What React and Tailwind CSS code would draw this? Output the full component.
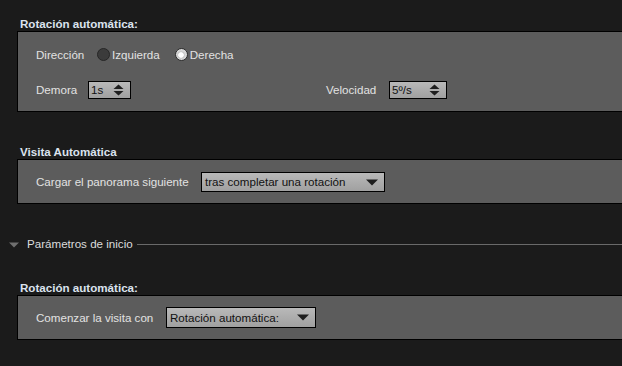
import React from "react";

const font = { fontFamily: '"Liberation Sans", Arial, sans-serif' };

function Stepper({ value, width }) {
  return (
    <div
      className={`flex items-center justify-between h-[18px] border border-black bg-gradient-to-b from-[#b9b9b9] to-[#a0a0a0] pl-[2px] pr-[6px] text-[#111] ${width}`}
    >
      <span className="leading-none">{value}</span>
      <svg width="11" height="12" viewBox="0 0 11 12">
        <path d="M0.5 5 L5.5 0.5 L10.5 5 Z" fill="#1e1e1e" />
        <path d="M0.5 7 L5.5 11.5 L10.5 7 Z" fill="#1e1e1e" />
      </svg>
    </div>
  );
}

function Dropdown({ value, width, height }) {
  return (
    <div
      className={`flex items-center justify-between border border-black bg-gradient-to-b from-[#b9b9b9] to-[#a0a0a0] pl-[3px] pr-[6px] text-[#111] ${width} ${height}`}
    >
      <span className="leading-none">{value}</span>
      <svg width="12" height="7" viewBox="0 0 12 7">
        <path d="M0 0.5 L12 0.5 L6 6.5 Z" fill="#1e1e1e" />
      </svg>
    </div>
  );
}

function Heading({ children }) {
  return (
    <div className="h-[14px] leading-[14px] pl-[20px] font-bold text-[#dbe3ee]">
      {children}
    </div>
  );
}

export default function App() {
  return (
    <div
      className="w-[622px] h-[366px] overflow-hidden bg-[#1b1b1b] text-[11.6px] text-[#e2e2e2] pt-[17px]"
      style={font}
    >
      <Heading>Rotación automática:</Heading>
      <div className="ml-[17px] w-[620px] h-[81px] border border-black bg-[#5c5c5c] pt-[13px] pl-[18px]">
        <div className="flex items-center h-[20px]">
          <div className="w-[61px]">Dirección</div>
          <div className="flex items-center gap-[2px]">
            <span className="w-[13px] h-[13px] rounded-full bg-[#3b3b3b] border border-[#262626]" />
            <span>Izquierda</span>
          </div>
          <div className="flex items-center gap-[2px] ml-[15px]">
            <span className="w-[13px] h-[13px] rounded-full bg-[#d8d8d8] border border-[#2a2a2a] flex items-center justify-center">
              <span className="w-[6px] h-[6px] rounded-full bg-white shadow-[0_0_1px_#555]" />
            </span>
            <span>Derecha</span>
          </div>
        </div>
        <div className="flex items-center h-[20px] mt-[15px]">
          <div className="w-[52px]">Demora</div>
          <Stepper value="1s" width="w-[43px]" />
          <div className="w-[195px]" />
          <div className="w-[63px]">Velocidad</div>
          <Stepper value="5º/s" width="w-[58px]" />
        </div>
      </div>

      <div className="mt-[33px]">
        <Heading>Visita Automática</Heading>
      </div>
      <div className="ml-[17px] w-[620px] h-[45px] border border-black bg-[#5c5c5c] pt-[12px] pl-[18px]">
        <div className="flex items-center h-[20px]">
          <div className="w-[165px]">Cargar el panorama siguiente</div>
          <Dropdown value="tras completar una rotación" width="w-[184px]" height="h-[20px]" />
        </div>
      </div>

      <div className="mt-[33px] flex items-center h-[14px]">
        <svg width="10" height="6" viewBox="0 0 10 6" className="ml-[9px] mt-[1px]">
          <path d="M0 0.5 L10 0.5 L5 5.5 Z" fill="#6f6f6f" />
        </svg>
        <span className="ml-[8px] text-[#dcdcdc] leading-[14px]">Parámetros de inicio</span>
        <div className="flex-1 h-px bg-[#6a6a6a] ml-[4px]" />
      </div>

      <div className="mt-[30px]">
        <Heading>Rotación automática:</Heading>
      </div>
      <div className="ml-[17px] w-[620px] h-[45px] border border-black bg-[#5c5c5c] pt-[11px] pl-[18px]">
        <div className="flex items-center h-[21px]">
          <div className="w-[130px]">Comenzar la visita con</div>
          <Dropdown value="Rotación automática:" width="w-[150px]" height="h-[21px]" />
        </div>
      </div>
    </div>
  );
}
